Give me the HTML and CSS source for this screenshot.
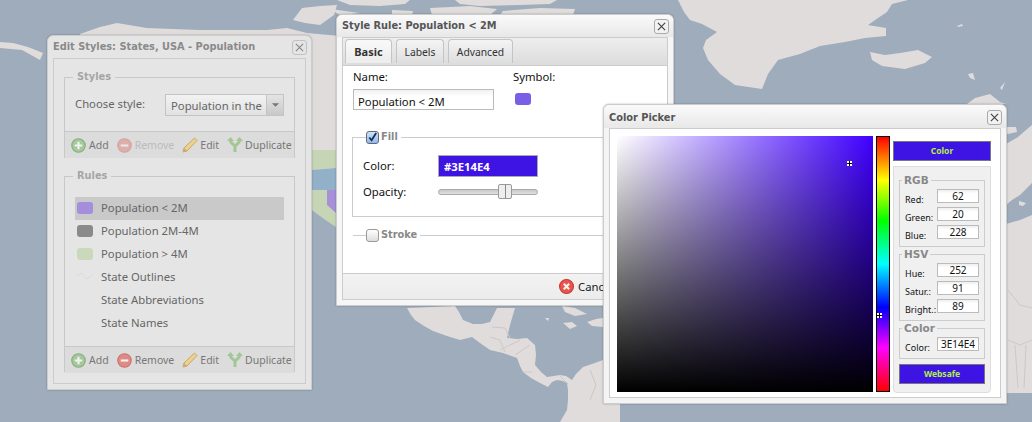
FILE: index.html
```html
<!DOCTYPE html>
<html lang="en">
<head>
<meta charset="utf-8">
<title>Edit Styles</title>
<link rel="stylesheet" href="styles.css">
</head>
<body>
<svg class="map" viewBox="0 0 1032 422" width="1032" height="422" aria-hidden="true">
  <g class="land">
    <path d="M0 42 13 43 28 47 43 53 40 60 22 50 0 48Z"/>
    <path d="M80 34 100 27 117 23 147 28 200 30 267 30 287 28 307 33 340 36 340 229 312 210 300 200 300 60 80 60Z"/>
    <path d="M293 20 302 8 320 6 337 5 334 15 320 25 305 23Z"/>
    <path d="M337 0H410L405 4 380 6 350 5Z"/>
    <path d="M455 0H557L550 4 520 5 480 6 460 4Z"/>
    <path d="M330 9 360 13 340 15Z M392 10 413 11 412 15H392Z M430 8 470 6 497 9 490 15H432Z M503 11 540 8 575 9 573 15H500Z"/>
    <path d="M678 0 684 12 690 20 702 24 717 32 706 40 703 48 708 60 720 74 735 85 762 89 768 74 778 60 800 54 820 46 845 42 865 38 886 36 886 28 868 25 878 18 887 12 892 4 908 0Z"/>
    <path d="M870 52 885 55 900 53 918 50 932 57 925 63 905 69 882 66 872 60Z"/>
    <path d="M957 26 962 24 963 26 958 27Z M968 74 973 73 975 80 970 78Z M1000 88 1005 82 1002 90Z"/>
    <path d="M967 104 975 98 990 94 1000 102 1006 104Z"/>
    <path d="M1006 127 1016 127 1017 132 1008 134 1006 133Z"/>
    <path d="M1006 144 1018 137 1026 130 1032 125V183L1020 195 1012 200 1006 205Z"/>
    <path d="M1019 201 1026 203 1023 206 1019 205Z"/>
    <path d="M1006 224 1020 220 1032 215V393H1006Z"/>
    <path d="M407 308 411 315 415 320 424 326 433 331 447 336 460 340 472 337 480 343 490 350 503 353 517 358 520 366 523 372 531 378 540 383 548 387 552 382 557 380 563 381 567 383 568 390 568 400 567 410 560 422H620V360H603L592 364 583 367 576 374 572 380 566 376 560 375 547 377 541 372 535 365 536 355 535 345 527 338 517 339 507 338 510 325 515 308H497L493 316 490 322 482 324 473 324 463 320 459 312 455 306Z"/>
    <path d="M562 306 575 308 587 314 575 316 565 312Z M563 323 572 322 577 326 570 329Z M587 322 596 319 603 318V327L592 326Z M545 318 549 318 548 321Z"/>
  </g>
  <g class="borders">
    <path d="M492 327 505 328 510 338M490 337 500 340 505 352M500 350 520 340M515 355 530 345M523 372 532 372M560 376 568 384M590 370 596 385 590 400"/>
    <path d="M1008 290 1020 305 1032 308M1008 340 1020 345 1032 340M1015 345 1018 388M1026 345 1024 388"/>
  </g>
  <path class="state green" d="M312 150H336V168L312 170Z"/>
  <path class="state blue" d="M312 170 336 168V190H312Z"/>
  <path class="state green" d="M312 190H336V227L324 219 312 210Z"/>
  <path class="state purple" d="M327 190H336V213L327 205Z"/>
</svg>

<section class="win win-styles">
  <header class="win-head">
    <h2>Edit Styles: States, USA - Population</h2>
    <button class="close" aria-label="Close"><svg viewBox="0 0 10 10"><path d="M1 1 9 9M9 1 1 9"/></svg></button>
  </header>
  <div class="win-body">
    <fieldset class="group group-styles">
      <legend>Styles</legend>
      <div class="choose">
        <label>Choose style:</label>
        <div class="select"><span>Population in the</span><i><svg viewBox="0 0 10 6"><path d="M1 1H9L5 5Z"/></svg></i></div>
      </div>
      <div class="tools">
        <span class="tool"><svg viewBox="0 0 14 14"><circle class="ic-green" cx="7" cy="7" r="6.300"/><path class="ic-white" d="M7 3.500V10.500M3.500 7H10.500"/></svg>Add</span>
        <span class="tool off"><svg viewBox="0 0 14 14"><circle class="ic-red" cx="7" cy="7" r="6.300"/><path class="ic-white" d="M3.500 7H10.500"/></svg>Remove</span>
        <span class="tool"><svg viewBox="0 0 16 16"><path class="ic-pencil" d="M12.500 1 15 3.500 5 14 1 15 2 11Z"/><path class="ic-tip" d="M2 11 1 15 5 14Z"/></svg>Edit</span>
        <span class="tool"><svg viewBox="0 0 16 16"><path class="ic-dup" d="M3.500 4C3.500 7 8 7 8 10M12.500 4C12.500 7 8 7 8 10M8 9V15"/><path class="ic-dup-head" d="M3.500 0 7 4H0ZM12.500 0 16 4H9Z"/></svg>Duplicate</span>
      </div>
    </fieldset>
    <fieldset class="group group-rules">
      <legend>Rules</legend>
      <ul class="rules">
        <li class="sel"><b class="sw sw-purple"></b>Population &lt; 2M</li>
        <li><b class="sw sw-gray"></b>Population 2M-4M</li>
        <li><b class="sw sw-green"></b>Population &gt; 4M</li>
        <li><b class="sw"><svg viewBox="0 0 16 12"><path d="M0 5 4 2 9 8 16 4"/></svg></b>State Outlines</li>
        <li><b class="sw"></b>State Abbreviations</li>
        <li><b class="sw"></b>State Names</li>
      </ul>
      <div class="tools">
        <span class="tool"><svg viewBox="0 0 14 14"><circle class="ic-green" cx="7" cy="7" r="6.300"/><path class="ic-white" d="M7 3.500V10.500M3.500 7H10.500"/></svg>Add</span>
        <span class="tool"><svg viewBox="0 0 14 14"><circle class="ic-red" cx="7" cy="7" r="6.300"/><path class="ic-white" d="M3.500 7H10.500"/></svg>Remove</span>
        <span class="tool"><svg viewBox="0 0 16 16"><path class="ic-pencil" d="M12.500 1 15 3.500 5 14 1 15 2 11Z"/><path class="ic-tip" d="M2 11 1 15 5 14Z"/></svg>Edit</span>
        <span class="tool"><svg viewBox="0 0 16 16"><path class="ic-dup" d="M3.500 4C3.500 7 8 7 8 10M12.500 4C12.500 7 8 7 8 10M8 9V15"/><path class="ic-dup-head" d="M3.500 0 7 4H0ZM12.500 0 16 4H9Z"/></svg>Duplicate</span>
      </div>
    </fieldset>
  </div>
</section>

<section class="win win-rule">
  <header class="win-head">
    <h2>Style Rule: Population &lt; 2M</h2>
    <button class="close" aria-label="Close"><svg viewBox="0 0 10 10"><path d="M1 1 9 9M9 1 1 9"/></svg></button>
  </header>
  <div class="win-body">
    <nav class="tabs">
      <a class="tab active">Basic</a>
      <a class="tab">Labels</a>
      <a class="tab">Advanced</a>
    </nav>
    <div class="pane">
      <div class="name-row">
        <div class="name-col">
          <label>Name:</label>
          <div class="textbox">Population &lt; 2M</div>
        </div>
        <div class="symbol-col">
          <label>Symbol:</label>
          <b class="sw-symbol"></b>
        </div>
      </div>
      <fieldset class="group-fill">
        <legend><span class="check on"><svg viewBox="0 0 12 12"><path d="M2.500 6 5 9 10 1"/></svg></span>Fill</legend>
        <div class="prop prop-color"><label>Color:</label><div class="colorbox">#3E14E4</div></div>
        <div class="prop"><label>Opacity:</label><div class="slider"><span class="thumb"></span></div></div>
      </fieldset>
      <fieldset class="group-stroke">
        <legend><span class="check"></span>Stroke</legend>
      </fieldset>
    </div>
    <footer class="foot">
      <span class="cancel"><svg viewBox="0 0 14 14"><circle class="ic-cancel" cx="7" cy="7" r="6.500"/><path class="ic-white" d="M4.500 4.500 9.500 9.500M9.500 4.500 4.500 9.500"/></svg>Cancel</span>
    </footer>
  </div>
</section>

<section class="win win-picker">
  <header class="win-head">
    <h2>Color Picker</h2>
    <button class="close" aria-label="Close"><svg viewBox="0 0 10 10"><path d="M1 1 9 9M9 1 1 9"/></svg></button>
  </header>
  <div class="win-body picker-body">
    <div class="square"><span class="marker marker-sq"></span></div>
    <div class="hue"><span class="marker marker-hue"></span></div>
    <div class="side">
      <div class="swatch-btn">Color</div>
      <div class="panel">
        <fieldset class="cgroup">
          <legend>RGB</legend>
          <div class="row"><label>Red:</label><span class="num">62</span></div>
          <div class="row"><label>Green:</label><span class="num">20</span></div>
          <div class="row"><label>Blue:</label><span class="num">228</span></div>
        </fieldset>
        <fieldset class="cgroup">
          <legend>HSV</legend>
          <div class="row"><label>Hue:</label><span class="num">252</span></div>
          <div class="row"><label>Satur.:</label><span class="num">91</span></div>
          <div class="row"><label>Bright.:</label><span class="num">89</span></div>
        </fieldset>
        <fieldset class="cgroup">
          <legend>Color</legend>
          <div class="row"><label>Color:</label><span class="num">3E14E4</span></div>
        </fieldset>
        <div class="swatch-btn websafe">Websafe</div>
      </div>
    </div>
  </div>
</section>
</body>
</html>
```
FILE: styles.css
```css
* { box-sizing: border-box; }
html, body { margin: 0; width: 1032px; height: 422px; overflow: hidden; }
body { position: relative; background: #9eacbc; font: 11.300px/14px "Noto Sans", "DejaVu Sans", sans-serif; color: #222; }
h2, ul { margin: 0; padding: 0; }
fieldset { margin: 0; min-width: 0; }
label { font-weight: 400; }
.map { position: absolute; left: 0; top: 0; display: block; }
.land path { fill: #e0dcdc; }
.borders path { fill: none; stroke: #cdc8c8; stroke-width: 1; }
.state { stroke: none; }
.green { fill: #c5d5b5; }
.blue { fill: #92b0c8; }
.purple { fill: #a690d8; }

.win { position: absolute; border: 1px solid #ccc; border-radius: 6px 6px 0 0; background: #f1f1f1; box-shadow: 0 0 2px rgba(0,0,0,.3); }
.win-head { height: 22px; display: flex; align-items: center; justify-content: space-between; padding: 0 4px 0 5px; background: linear-gradient(#fafafa, #e8e8e8); border-radius: 6px 6px 0 0; }
.win-head h2 { font: 700 9.800px/14px "DejaVu Sans", sans-serif; color: #555; }
.close { width: 15px; height: 15px; padding: 2px; border: 1px solid #aaa; border-radius: 3px; background: #f2f2f2; display: block; }
.close svg { display: block; width: 9px; height: 9px; }
.close path { fill: none; stroke: #444; stroke-width: 1.300; }
.win-body { border: 1px solid #ccc; }

.win-styles { left: 47px; top: 35px; width: 265px; height: 355px; background: #e5e5e5; color: #666; }
.win-styles .win-head { background: #e5e5e5; }
.win-styles .win-head h2 { color: #8a8a8a; }
.win-styles .close { background: #e4e4e4; border-color: #c2c2c2; }
.win-styles .close path { stroke: #888; }
.win-styles .win-body { margin: 0 5px; height: 326px; padding: 11px 10px 0; border-color: #ccc; }
.group { border: 1px solid #c8c8c8; padding: 0; }
.group legend { margin-left: 8px; padding: 0 4px; font: 700 9.800px/14px "DejaVu Sans", sans-serif; color: #a5a5a5; }
.group-styles { height: 88px; display: block; }
.group-rules { margin-top: 11px; height: 203px; }
.choose { height: 47px; display: flex; align-items: flex-start; padding: 10px 0 0 10px; }
.choose label { width: 90px; line-height: 20px; }
.select { width: 119px; height: 22px; border: 1px solid #c4c4c4; background: linear-gradient(#f2f2f2, #e2e2e2); display: flex; align-items: center; padding-left: 5px; position: relative; }
.select span { flex: 1; overflow: hidden; white-space: nowrap; padding-top: 1px; }
.select i { width: 17px; height: 20px; background: linear-gradient(#e4e4e4, #c8c8c8); border-left: 1px solid #c4c4c4; display: flex; align-items: center; justify-content: center; }
.select svg { width: 9px; height: 6px; fill: #777; }
.tools { height: 27px; display: flex; align-items: center; background: #dcdcdc; border-top: 1px solid #c8c8c8; padding-left: 6px; gap: 8px; font-size: 10.500px; color: #777; white-space: nowrap; }
.tool { display: flex; align-items: center; gap: 3px; }
.tool svg { width: 15px; height: 15px; flex: none; }
.tool:nth-child(n+3) svg { width: 16px; height: 16px; }
.tool:nth-child(n+3) { gap: 2px; }
.tool.off { color: #bbb; }
.tool.off svg { opacity: .55; }
.ic-green { fill: #a5c99a; stroke: #83ad7c; }
.ic-red { fill: #e08a85; stroke: #cf716b; }
.ic-cancel { fill: #e8564b; stroke: #c9392f; }
.ic-white { fill: none; stroke: #f2f2f2; stroke-width: 2; }
.ic-pencil { fill: #ecd28e; stroke: #c7a765; }
.ic-tip { fill: #caa878; }
.ic-dup { fill: none; stroke: #a3c695; stroke-width: 3; }
.ic-dup-head { fill: #a3c695; }
.rules { list-style: none; margin: 14px 10px 0; height: 149px; }
.rules li { height: 23px; display: flex; align-items: center; padding: 0 0 2px 2px; gap: 8px; }
.rules li.sel { background: #c9c9c9; }
.sw { width: 16px; height: 12px; border-radius: 3px; flex: none; }
.sw svg { display: block; width: 16px; height: 12px; fill: none; stroke: #dadada; }
.sw-purple { background: #a58fdc; }
.sw-gray { background: #8a8a8a; }
.sw-green { background: #cbd9bb; }

.win-rule { left: 336px; top: 14px; width: 338px; height: 292px; background: #f6f6f6; }
.win-rule .win-body { margin: 0 5px; height: 263px; background: #fff; display: flex; flex-direction: column; }
.tabs { height: 28px; display: flex; align-items: flex-start; gap: 4px; padding: 1px 0 0 2px; background: linear-gradient(#eee, #dcdcdc); border-bottom: 1px solid #ccc; }
.tab { width: 47px; height: 24px; display: flex; align-items: center; justify-content: center; border: 1px solid #c4c4c4; border-bottom: 0; border-radius: 4px 4px 0 0; background: linear-gradient(#f4f4f4, #dedede); color: #333; font-size: 10.300px; }
.tab.active { background: linear-gradient(#f9f9f9, #ececec); font-weight: 700; font-size: 11px; }
.tab:nth-child(2) { width: 48px; }
.tab:nth-child(3) { width: 65px; }
.pane { flex: 1; padding: 2px 0 0 10px; border-top: 2px solid #fff; }
.name-row { display: flex; height: 60px; }
.name-col { width: 160px; }
.name-col label, .symbol-col label { display: block; height: 16px; color: #111; }
.textbox { margin-top: 3px; width: 141px; height: 21px; border: 1px solid #bbb; padding: 5px 4px 0; color: #111; background: linear-gradient(#f1f1f1, #fff 35%); }
.sw-symbol { display: block; margin: 7px 0 0 2px; width: 16px; height: 12px; border-radius: 3px; background: #7b5ee8; }
.group-fill { border: 1px solid #ccc; border-right: 0; padding: 0; margin: 0 0 0 -1px; height: 87px; }
.group-fill legend, .group-stroke legend { margin-left: 13px; padding: 0 3px 0 0; display: flex; align-items: center; gap: 2px; font: 700 9.800px/14px "DejaVu Sans", sans-serif; color: #888; }
.check { width: 13px; height: 13px; border: 1px solid #999; border-radius: 3px; background: linear-gradient(#fff, #ddd); display: block; }
.check.on { background: linear-gradient(#cfe3f8, #8cbcec); border-color: #667; }
.check svg { display: block; width: 11px; height: 11px; fill: none; stroke: #1c2c55; stroke-width: 2; }
.prop { display: flex; align-items: center; padding-left: 10px; height: 22px; color: #111; }
.prop label { width: 75px; }
.prop-color { margin: 11px 0 4px; }
.colorbox { width: 100px; height: 22px; background: #3e14e4; border: 1px solid #aaa; color: #fff; font-weight: 700; padding: 4px 5px 0; }
.slider { width: 100px; height: 6px; border: 1px solid #aaa; border-radius: 3px; background: linear-gradient(#c8c8c8, #e0e0e0); position: relative; }
.thumb { position: absolute; left: 59px; top: -6px; width: 14px; height: 15px; border: 1px solid #999; border-radius: 2px; background: linear-gradient(90deg, #eee 48%, #888 48%, #888 56%, #eee 56%); }
.group-stroke { border: 0; border-top: 1px solid #ccc; padding: 0; margin-top: 11px; height: 28px; }
.foot { flex: none; height: 26px; border-top: 1px solid #ccc; background: linear-gradient(#f2f2f2, #ececec); display: flex; align-items: center; padding-left: 216px; margin: 0; }
.cancel { display: flex; align-items: center; gap: 4px; color: #222; }
.cancel svg { width: 15px; height: 15px; }

.win-picker { left: 603px; top: 104px; width: 404px; height: 300px; background: #f4f4f4; }
.win-picker .win-head { height: 23px; padding-top: 2px; }
.picker-body { margin: 0 5px; height: 270px; padding: 7px 9px 5px 7px; background: #fff; display: flex; }
.square { width: 256px; height: 256px; position: relative; background: linear-gradient(transparent, #000), linear-gradient(90deg, #fff, #4000ff); }
.hue { width: 14px; height: 256px; margin-left: 3px; border: 1px solid #000; position: relative; background: linear-gradient(#f00, #ff0 17%, #0f0 33%, #0ff 50%, #00f 67%, #f0f 83%, #f00); }
.marker { position: absolute; width: 5px; height: 5px; background: conic-gradient(#000 0 0) center / 1px 5px no-repeat, conic-gradient(#000 0 0) center / 5px 1px no-repeat, #fff; }
.marker-sq { left: 230px; top: 25px; }
.marker-hue { left: 0; top: 176px; }
.side { margin-left: 3px; width: 98px; }
.swatch-btn { height: 20px; background: #3e14e4; border: 1px solid #777; color: #b3f23c; text-align: center; font: 700 8.500px/18px "Noto Sans", sans-serif; }
.side > .swatch-btn { margin-top: 5px; }
.panel { margin-top: 5px; height: 227px; background: #f0f0f0; border: 1px solid #ddd; border-radius: 0 0 4px 4px; padding: 7px 5px 0; }
.cgroup { border: 1px solid #ccc; padding: 2px 5px 3px; margin: 0 0 1px; }
.cgroup legend { padding: 0 2px; margin-left: -3px; font: 700 10.500px/13px "DejaVu Sans", sans-serif; color: #888; }
.row { height: 18px; display: flex; align-items: center; justify-content: space-between; font-size: 9px; color: #111; }
.row label { margin-top: 4px; }
.num { width: 42px; height: 14px; margin-bottom: 5px; background: linear-gradient(#eee, #fff 30%); border: 1px solid #bbb; text-align: center; font: 10px/12px "Noto Sans", sans-serif; color: #111; }
.websafe { margin-top: 5px; }
```
